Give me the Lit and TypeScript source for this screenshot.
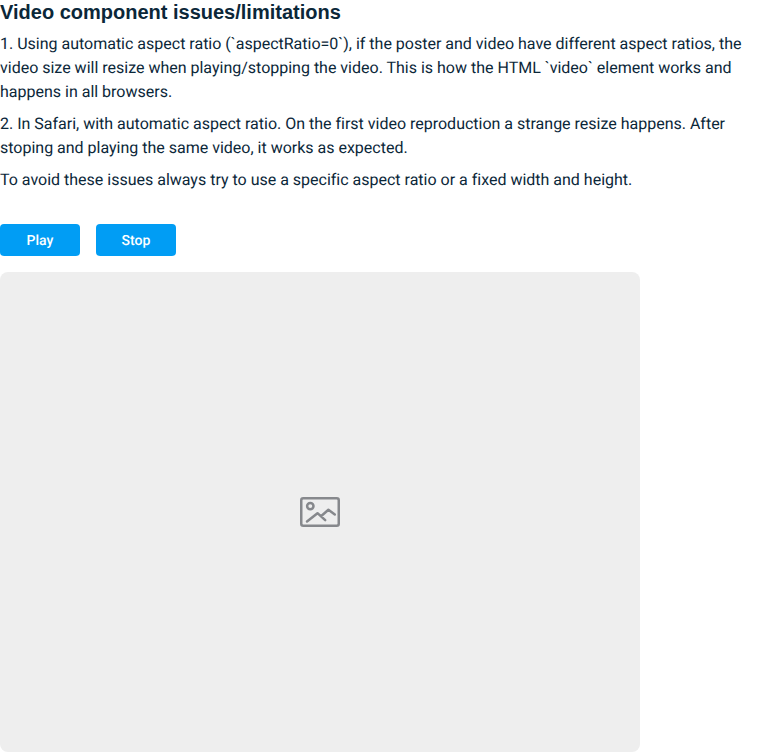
import { LitElement, html, css } from "lit";
import { customElement, property } from "lit/decorators.js";

@customElement("action-button")
class ActionButton extends LitElement {
  @property() label = "";
  static styles = css`
    :host { display: block; }
    .button {
      display: block; width: 80px; height: 32px; padding: 2px 0 0; border: 0; border-radius: 4px;
      background: #019df4; color: #fff; font: 500 14px/20px Roboto, sans-serif;
      text-rendering: geometricPrecision;
    }
  `;
  render() {
    return html`<button class="button">${this.label}</button>`;
  }
}

@customElement("video-placeholder")
class VideoPlaceholder extends LitElement {
  static styles = css`
    :host {
      display: flex; align-items: center; justify-content: center;
      width: 640px; height: 480px; border-radius: 8px; background: #eeeeee;
    }
    .icon { display: block; width: 40px; height: 40px; }
  `;
  render() {
    return html`<svg class="icon" viewBox="0 0 40 40" fill="none" stroke="#86888c" stroke-width="2.5" stroke-linecap="round" stroke-linejoin="round">
      <rect x="1.25" y="6.25" width="37.5" height="27.5" rx="2"></rect>
      <circle cx="10.3" cy="14.1" r="3.2"></circle>
      <path d="M7 29.5 17.5 21.2 25.2 28.2M21 24.2 28.4 17.8 34.8 22.5"></path>
    </svg>`;
  }
}

@customElement("app-root")
class AppRoot extends LitElement {
  static styles = css`
    :host { display: block; color: #0b2739; font: 400 16px/24px Roboto, sans-serif; }
    .title { margin: 0 0 8px; font: 700 20px/24px "Liberation Sans", Arial, sans-serif; }
    .text {
      margin: 0 0 8px; letter-spacing: -0.004px;
      text-rendering: geometricPrecision; font-variant-ligatures: none;
    }
    .actions { display: flex; gap: 16px; margin: 32px 0 16px; }
  `;
  render() {
    return html`
      <h2 class="title">Video component issues/limitations</h2>
      <p class="text">1. Using automatic aspect ratio (\`aspectRatio=0\`), if the poster and video have different aspect ratios, the video size will resize when playing/stopping the video. This is how the HTML \`video\` element works and happens in all browsers.</p>
      <p class="text">2. In Safari, with automatic aspect ratio. On the first video reproduction a strange resize happens. After stoping and playing the same video, it works as expected.</p>
      <p class="text">To avoid these issues always try to use a specific aspect ratio or a fixed width and height.</p>
      <div class="actions">
        <action-button label="Play"></action-button>
        <action-button label="Stop"></action-button>
      </div>
      <video-placeholder></video-placeholder>
    `;
  }
}
